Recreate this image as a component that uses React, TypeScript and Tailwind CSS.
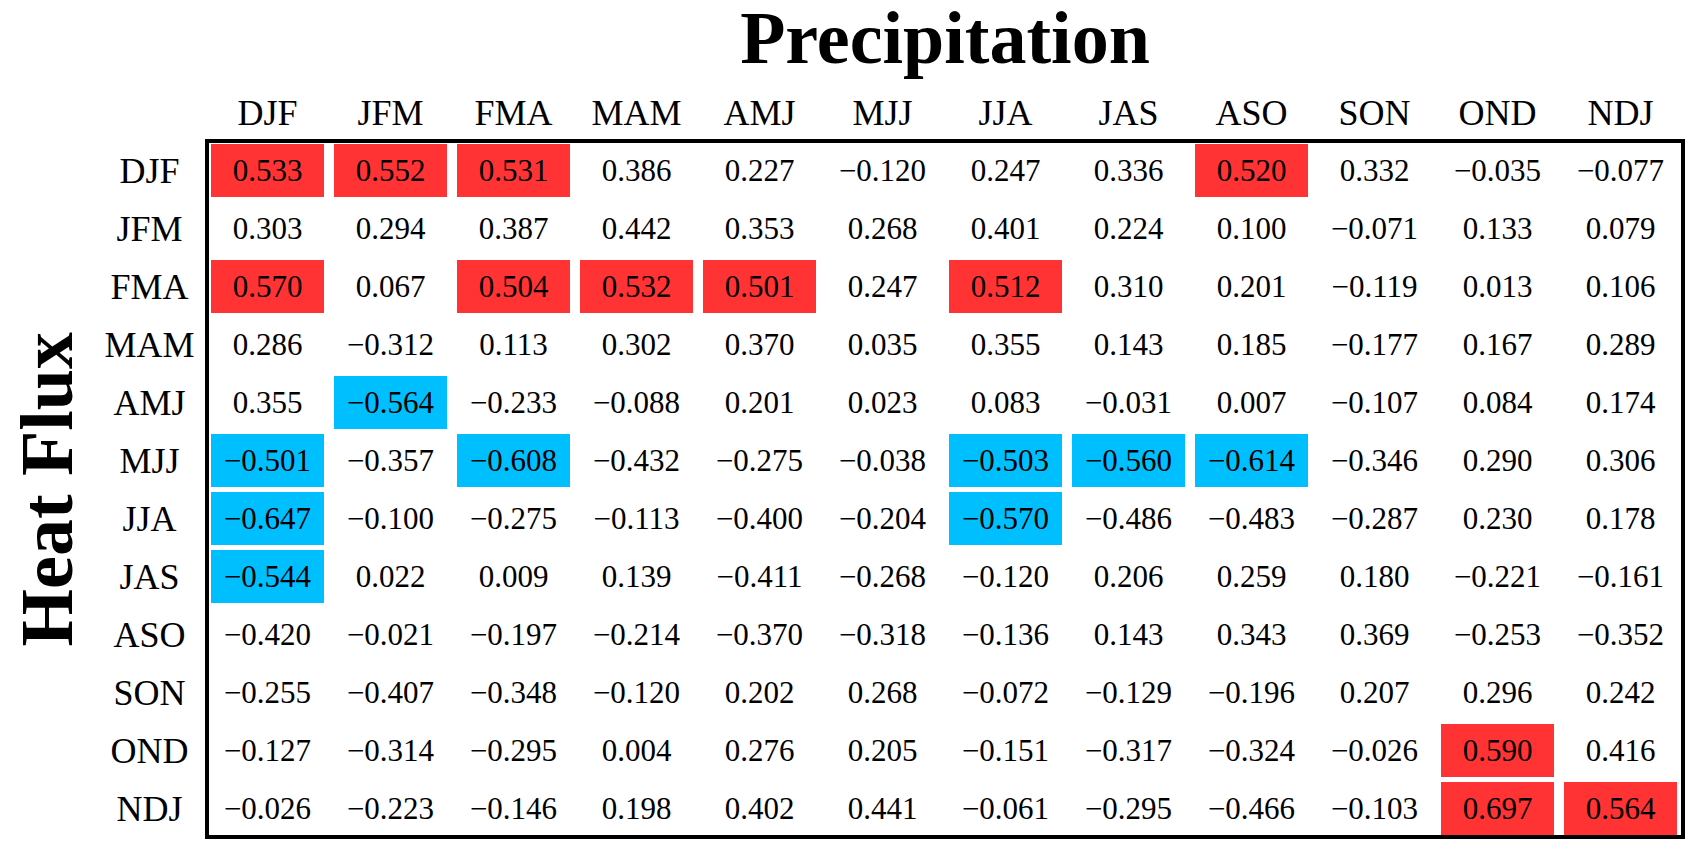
import React from 'react';

const SEASONS = ['DJF', 'JFM', 'FMA', 'MAM', 'AMJ', 'MJJ', 'JJA', 'JAS', 'ASO', 'SON', 'OND', 'NDJ'];

const VALUES: number[][] = [
  [0.533, 0.552, 0.531, 0.386, 0.227, -0.12, 0.247, 0.336, 0.52, 0.332, -0.035, -0.077],
  [0.303, 0.294, 0.387, 0.442, 0.353, 0.268, 0.401, 0.224, 0.1, -0.071, 0.133, 0.079],
  [0.57, 0.067, 0.504, 0.532, 0.501, 0.247, 0.512, 0.31, 0.201, -0.119, 0.013, 0.106],
  [0.286, -0.312, 0.113, 0.302, 0.37, 0.035, 0.355, 0.143, 0.185, -0.177, 0.167, 0.289],
  [0.355, -0.564, -0.233, -0.088, 0.201, 0.023, 0.083, -0.031, 0.007, -0.107, 0.084, 0.174],
  [-0.501, -0.357, -0.608, -0.432, -0.275, -0.038, -0.503, -0.56, -0.614, -0.346, 0.29, 0.306],
  [-0.647, -0.1, -0.275, -0.113, -0.4, -0.204, -0.57, -0.486, -0.483, -0.287, 0.23, 0.178],
  [-0.544, 0.022, 0.009, 0.139, -0.411, -0.268, -0.12, 0.206, 0.259, 0.18, -0.221, -0.161],
  [-0.42, -0.021, -0.197, -0.214, -0.37, -0.318, -0.136, 0.143, 0.343, 0.369, -0.253, -0.352],
  [-0.255, -0.407, -0.348, -0.12, 0.202, 0.268, -0.072, -0.129, -0.196, 0.207, 0.296, 0.242],
  [-0.127, -0.314, -0.295, 0.004, 0.276, 0.205, -0.151, -0.317, -0.324, -0.026, 0.59, 0.416],
  [-0.026, -0.223, -0.146, 0.198, 0.402, 0.441, -0.061, -0.295, -0.466, -0.103, 0.697, 0.564],
];

// minus sign as in the typeset figure
const fmt = (v: number) => (v < 0 ? '\u2212' : '') + Math.abs(v).toFixed(3);

function cellClass(v: number) {
  if (v >= 0.5) return 'bg-[#ff3333]';
  if (v <= -0.5) return 'bg-[#00bfff]';
  return '';
}

export default function App() {
  return (
    <div className="h-[850px] w-[1694px] bg-white font-['Liberation_Serif','Times_New_Roman',serif] text-black">
      <div className="grid grid-cols-[94px_111px_1480px] grid-rows-[95px_44px_700px]">
        {/* title */}
        <div className="col-start-3 row-start-1 pt-[1px] text-center text-[74px] font-bold leading-none">
          Precipitation
        </div>

        {/* column headers */}
        <div className="col-start-3 row-start-2 grid grid-cols-[repeat(12,113px)] gap-x-[10px] pl-[6px]">
          {SEASONS.map((s) => (
            <div key={s} className="text-center text-[36px] leading-9">
              {s}
            </div>
          ))}
        </div>

        {/* y axis title */}
        <div className="col-start-1 row-start-3 flex items-center justify-center">
          <span className="rotate-180 whitespace-nowrap text-[74px] font-bold leading-none [writing-mode:vertical-rl]">
            Heat Flux
          </span>
        </div>

        {/* row labels */}
        <div className="col-start-2 row-start-3 grid auto-rows-[53px] gap-y-[5px] pt-[5px]">
          {SEASONS.map((s) => (
            <div key={s} className="flex items-center justify-center text-[36px] leading-none">
              {s}
            </div>
          ))}
        </div>

        {/* matrix */}
        <div className="col-start-3 row-start-3 border-4 border-black pl-[2px] pt-[1px]">
          <div className="grid grid-cols-[repeat(12,113px)] auto-rows-[53px] gap-x-[10px] gap-y-[5px]">
            {VALUES.map((row, i) =>
              row.map((v, j) => (
                <div
                  key={`${i}-${j}`}
                  className={`flex items-center justify-center text-[31px] leading-none ${cellClass(v)}`}
                >
                  {fmt(v)}
                </div>
              ))
            )}
          </div>
        </div>
      </div>
    </div>
  );
}
